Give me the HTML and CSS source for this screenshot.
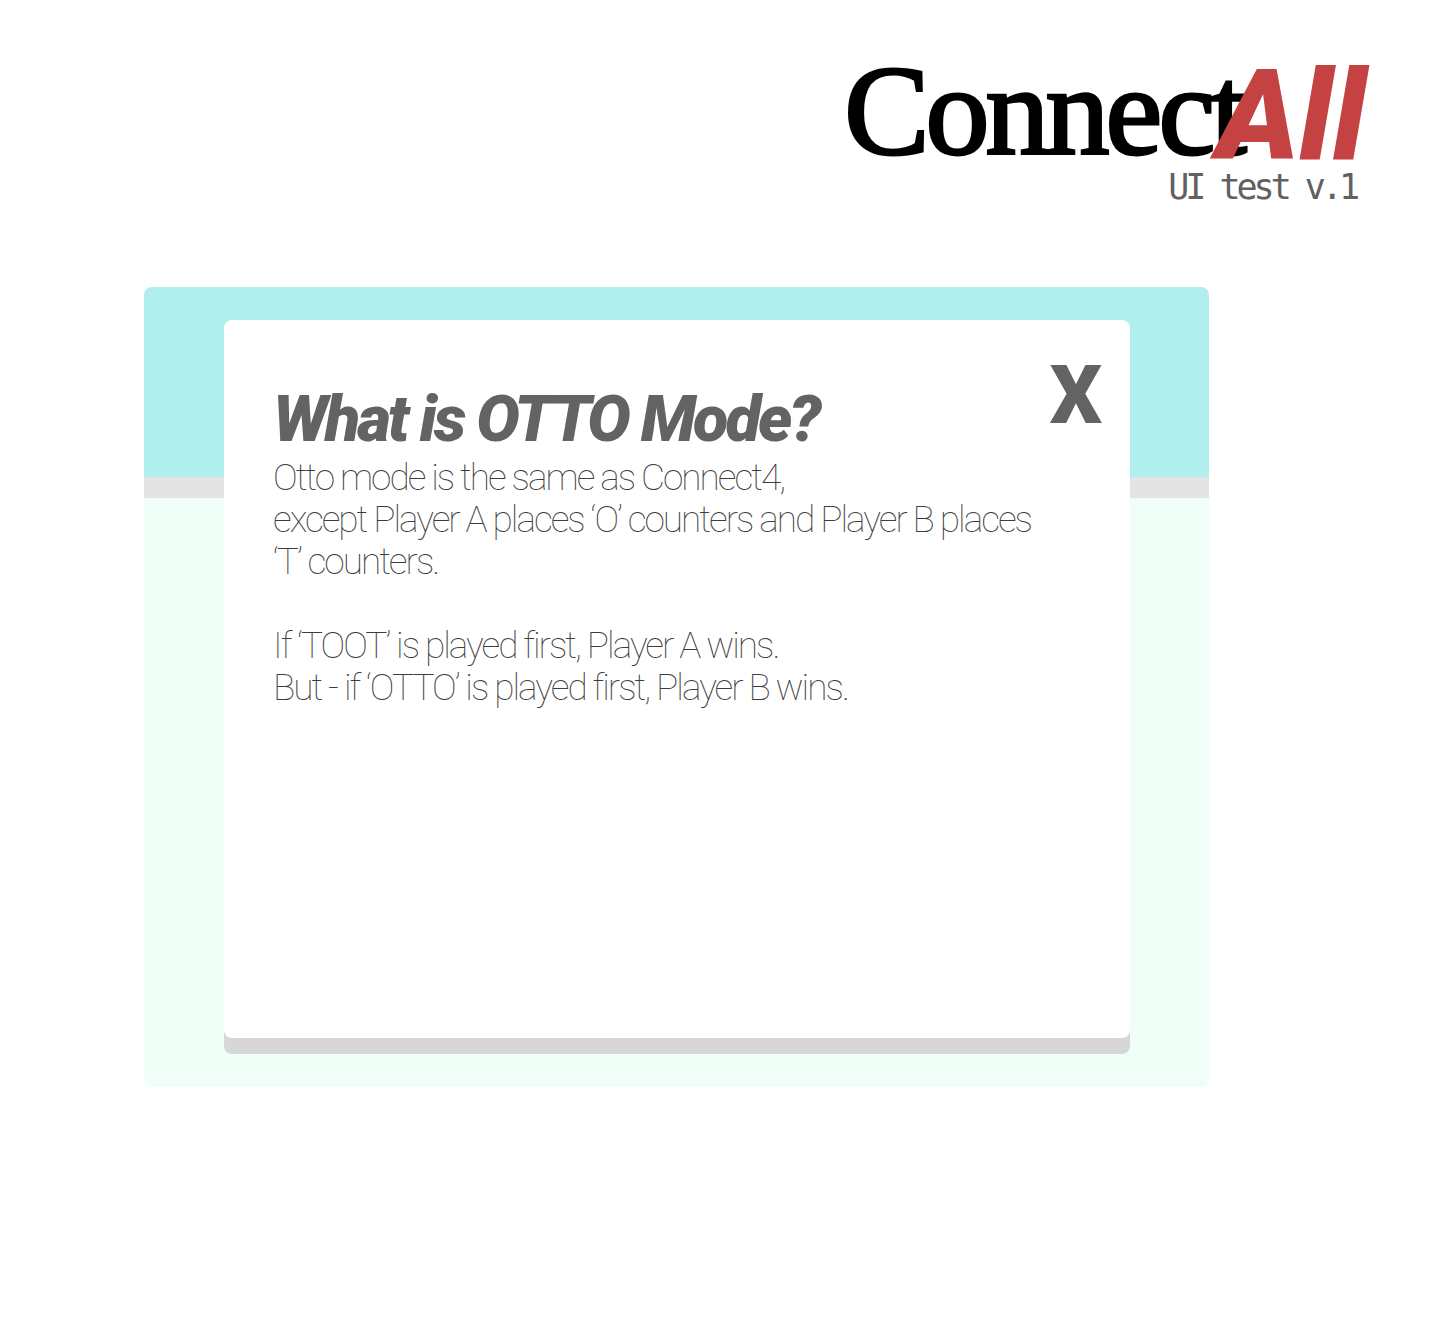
FILE: index.html
```html
<!DOCTYPE html>
<html lang="en">
<head>
<meta charset="utf-8">
<meta name="viewport" content="width=device-width, initial-scale=1">
<title>ConnectAll</title>
<link rel="stylesheet" href="styles.css">
</head>
<body>
<header class="site-header">
  <h1 class="logo"><span class="logo-connect">Connect</span><span class="logo-all">All</span></h1>
  <p class="version">UI test v.1</p>
</header>
<main class="stage">
  <section class="dialog" role="dialog" aria-labelledby="dialog-title">
    <div class="dialog-copy">
      <h2 class="dialog-title" id="dialog-title">What is OTTO Mode?</h2>
      <p class="dialog-text">Otto mode is the same as Connect4,<br>except Player A places ‘O’ counters and Player B places ‘T’ counters.</p>
      <p class="dialog-text">If ‘TOOT’ is played first, Player A wins.<br>But - if ‘OTTO’ is played first, Player B wins.</p>
    </div>
    <button class="close" type="button" aria-label="Close">X</button>
  </section>
</main>
</body>
</html>
```

FILE: styles.css
```css
* {
  box-sizing: border-box;
}

body {
  margin: 0;
  background: #fff;
  color: #636363;
  font-family: Roboto, sans-serif;
}

h1, h2, p {
  margin: 0;
}

.site-header {
  display: flex;
  flex-direction: column;
  align-items: flex-end;
  padding: 57px 74px 0 0;
}

.logo {
  display: flex;
  align-items: flex-end;
  line-height: 108px;
}

.logo-connect {
  padding-bottom: 6px;
  color: #000;
  font-family: "Liberation Serif", serif;
  font-size: 128px;
  font-weight: 400;
  letter-spacing: -4px;
  -webkit-text-stroke: 3px #000;
}

.logo-all {
  z-index: 1;
  margin-left: -26px;
  color: #c54242;
  font-size: 125px;
  font-style: italic;
  font-weight: 900;
}

.version {
  padding-right: 10px;
  color: #636060;
  font-family: "DejaVu Sans Mono", monospace;
  font-size: 35px;
  letter-spacing: -4px;
  line-height: 32px;
}

.stage {
  margin: 84px 231px 0 144px;
  padding: 33px 79px 33px 80px;
  border-radius: 8px;
  background: linear-gradient(#b1eeee 190px, #e4e4e4 190px 211px, #effff8 211px);
}

.dialog {
  display: flex;
  justify-content: space-between;
  min-height: 718px;
  margin-bottom: 16px;
  padding: 36px 28px 48px 49px;
  border-radius: 8px;
  background: #fff;
  box-shadow: 0 16px 0 #d7d7d7;
}

.dialog-copy {
  flex: 1;
  padding-top: 27px;
}

.dialog-title {
  margin-bottom: 2px;
  font-size: 65px;
  font-style: italic;
  font-weight: 900;
  letter-spacing: -3px;
  line-height: 72px;
}

.dialog-text {
  margin-bottom: 42px;
  color: #3c3c3c;
  font-size: 37px;
  font-weight: 100;
  letter-spacing: -2px;
  line-height: 42px;
}

.close {
  align-self: flex-start;
  padding: 0;
  border: 0;
  background: none;
  color: #636363;
  cursor: pointer;
  font: 900 82px/78px Roboto, sans-serif;
}
```
